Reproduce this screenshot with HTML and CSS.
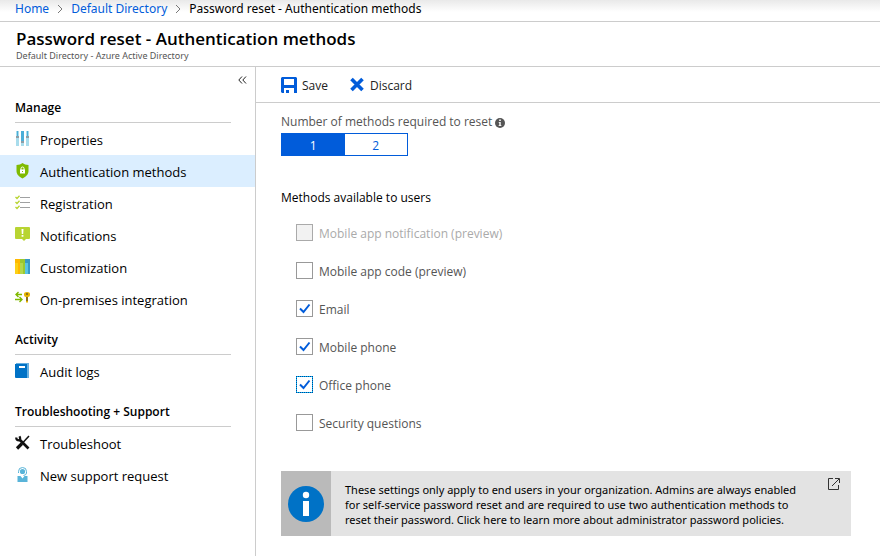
FILE: index.html
```html
<!DOCTYPE html>
<html lang="en">
<head>
<meta charset="utf-8">
<meta name="viewport" content="width=device-width, initial-scale=1">
<title>Password reset - Authentication methods</title>
<link rel="stylesheet" href="styles.css">
</head>
<body>
<nav class="breadcrumb" aria-label="Breadcrumb">
  <a href="#">Home</a>
  <svg class="crumb-sep" viewBox="0 0 6 10" aria-hidden="true"><path d="M1 1l4 4-4 4"/></svg>
  <a href="#">Default Directory</a>
  <svg class="crumb-sep" viewBox="0 0 6 10" aria-hidden="true"><path d="M1 1l4 4-4 4"/></svg>
  <span>Password reset - Authentication methods</span>
</nav>
<header class="blade-header">
  <h1>Password reset - Authentication methods</h1>
  <p>Default Directory - Azure Active Directory</p>
</header>
<div class="blade">
  <aside class="sidebar">
    <button class="collapse" type="button" aria-label="Collapse menu">
      <svg viewBox="0 0 9 8" aria-hidden="true"><path d="M4 .5L.8 4 4 7.500M8 .5L4.800 4 8 7.500"/></svg>
    </button>
    <section class="group">
      <h2>Manage</h2>
      <a class="item" href="#">
        <svg class="icon" viewBox="0 0 16 16" aria-hidden="true"><path fill="#a8dcec" d="M1 0h3v15H1zM6 0h3v15H6zM11 0h3v15h-3z"/><path fill="#4baed8" d="M2 0h1v6H2zM6 0h3v11H6zM12 0h1v5h-1z"/><path fill="#8d9da6" d="M1 5h3v2H1zM6 10h3v2H6zM11 5h3v2h-3z"/></svg>
        <span>Properties</span></a>
      <a class="item selected" href="#" aria-current="page">
        <svg class="icon" viewBox="0 0 16 16" aria-hidden="true"><path fill="#7fba00" d="M7.500 0C9 1.300 11 2 13.500 2v6c0 3.500-2.500 5.500-6 7.500-3.500-2-6-4-6-7.500V2C4 2 6 1.300 7.500 0z"/><path fill="#fff" d="M5 6.500h5v4H5z"/><path fill="none" stroke="#fff" d="M6 7V5.500a1.500 1.500 0 0 1 3 0V7"/><path fill="#7fba00" d="M7 8h1v1H7z"/></svg>
        <span>Authentication methods</span></a>
      <a class="item" href="#">
        <svg class="icon" viewBox="0 0 16 16" aria-hidden="true"><path fill="#a0a1a2" d="M5 2h10v1H5zM5 7h10v1H5zM5 12h10v1H5z"/><path fill="none" stroke="#b8d432" stroke-width="1.300" d="M.5 2l1.500 1.500L4.500.7M.5 7L2 8.500l2.500-2.800M.5 12L2 13.500l2.500-2.800"/></svg>
        <span>Registration</span></a>
      <a class="item" href="#">
        <svg class="icon" viewBox="0 0 16 16" aria-hidden="true"><path fill="#b8d432" d="M1 0h13q1 0 1 1v10q0 1-1 1h-3l-2 2-2-2H1q-1 0-1-1V1q0-1 1-1z"/><path fill="#fff" d="M6.500 2h2l-.3 5H6.800zM6.600 8h1.800v1.800H6.600z"/></svg>
        <span>Notifications</span></a>
      <a class="item" href="#">
        <svg class="icon" viewBox="0 0 16 16" aria-hidden="true"><path fill="#ffb900" d="M0 0h5v15H0z"/><path fill="#fcd116" d="M0 4h3v11H0z"/><path fill="#9bc830" d="M5 0h5v15H5z"/><path fill="#b4d84c" d="M5 4h3v11H5z"/><path fill="#3999c6" d="M10 0h5v15h-5z"/><path fill="#59c4e4" d="M10 4h3v11h-3z"/></svg>
        <span>Customization</span></a>
      <a class="item" href="#">
        <svg class="icon" viewBox="0 0 16 16" aria-hidden="true"><path fill="none" stroke="#7fba00" stroke-width="1.400" d="M7 3.500H1M3.500 1L1 3.500 3.500 6M0 8.500h7M4.500 6L7 8.500 4.500 11"/><path fill="#e8b400" d="M9 3q0-2 3-2t3 2v1q0 2-2 2v5l-1 1-1-1V6Q9 6 9 4z"/><path fill="#333" d="M11 2.500h2v1h-2zM11.500 6h1v4h-1z"/></svg>
        <span>On-premises integration</span></a>
    </section>
    <section class="group">
      <h2>Activity</h2>
      <a class="item" href="#">
        <svg class="icon" viewBox="0 0 16 16" aria-hidden="true"><path fill="#68b0e0" d="M1 0h13v15H1z"/><path fill="#0072c6" d="M0 1h12v14H1q-1 0-1-1z"/><path fill="#fff" d="M4 3h6v2H4z"/></svg>
        <span>Audit logs</span></a>
    </section>
    <section class="group">
      <h2>Troubleshooting + Support</h2>
      <a class="item" href="#">
        <svg class="icon" viewBox="0 0 16 16" aria-hidden="true"><path fill="none" stroke="#111" stroke-width="2.600" d="M4 4l9.500 9.500"/><path fill="none" stroke="#111" stroke-width="2.200" d="M1.200 2.500q0 3 3 3Q6 4 4.500 1.200"/><path fill="none" stroke="#111" stroke-width="1.500" d="M14 1L8 7.500"/><path fill="none" stroke="#111" stroke-width="3.200" d="M7 8.500l-5 5"/></svg>
        <span>Troubleshoot</span></a>
      <a class="item" href="#">
        <svg class="icon" viewBox="0 0 16 16" aria-hidden="true"><circle cx="7.500" cy="4.500" r="2.600" fill="#59b4d9"/><path fill="none" stroke="#59b4d9" d="M3.500 6V4.500a4 4 0 0 1 8 0V6q0 2-3 2.500"/><path fill="#59b4d9" d="M2.500 9h3l2 2.500 2-2.500h3v6h-10z"/></svg>
        <span>New support request</span></a>
    </section>
  </aside>
  <main class="content">
    <div class="toolbar">
      <button type="button">
        <svg viewBox="0 0 16 16" aria-hidden="true"><path fill="#015cda" fill-rule="evenodd" d="M1 0h14l1 1v15h-3v-5H3v5H1l-1-1V1zM3 2v6h10V2zM5 13h3v3H5z"/></svg>
        <span>Save</span></button>
      <button type="button">
        <svg viewBox="0 0 16 16" aria-hidden="true"><path fill="none" stroke="#015cda" stroke-width="3.600" d="M2.500 2l11 11M13.500 2l-11 11"/></svg>
        <span>Discard</span></button>
    </div>
    <form class="settings">
      <fieldset class="count">
        <legend>Number of methods required to reset
          <svg viewBox="0 0 10 10" aria-hidden="true"><circle cx="5" cy="5" r="5" fill="#555"/><path fill="#fff" d="M4.200 1.500h1.600V3H4.200zM3.700 4h2v3.200h.7V8H3.600v-.8h.7V4.800h-.6z"/></svg>
        </legend>
        <div class="toggle">
          <label><input type="radio" name="count" checked><span>1</span></label>
          <label><input type="radio" name="count"><span>2</span></label>
        </div>
      </fieldset>
      <fieldset class="methods">
        <legend>Methods available to users</legend>
        <label class="disabled"><input type="checkbox" disabled><span class="name">Mobile app notification (preview)</span></label>
        <label><input type="checkbox"><span class="name">Mobile app code (preview)</span></label>
        <label><span class="box"><input type="checkbox" checked><svg viewBox="0 0 17 17" aria-hidden="true"><path d="M4 8.500l3.500 3.500L13.500 4.500"/></svg></span><span class="name">Email</span></label>
        <label><span class="box"><input type="checkbox" checked><svg viewBox="0 0 17 17" aria-hidden="true"><path d="M4 8.500l3.500 3.500L13.500 4.500"/></svg></span><span class="name">Mobile phone</span></label>
        <label><span class="box"><input class="focused" type="checkbox" checked><svg viewBox="0 0 17 17" aria-hidden="true"><path d="M4 8.500l3.500 3.500L13.500 4.500"/></svg></span><span class="name">Office phone</span></label>
        <label><input type="checkbox"><span class="name">Security questions</span></label>
      </fieldset>
      <a class="notice" href="#">
        <span class="notice-icon"><svg viewBox="0 0 36 36" aria-hidden="true"><circle cx="18" cy="18" r="18" fill="#0072c6"/><circle cx="18" cy="9" r="3.200" fill="#fff"/><path fill="#fff" d="M15 15h6v15h-6z"/></svg></span>
        <span class="notice-text">These settings only apply to end users in your organization. Admins are always enabled for self-service password reset and are required to use two authentication methods to reset their password. Click here to learn more about administrator password policies.</span>
        <svg class="external" viewBox="0 0 12 12" aria-hidden="true"><path d="M5 .5H.5v11h10V7M4 8l7-7M7 .5h4.500V5"/></svg>
      </a>
    </form>
  </main>
</div>
</body>
</html>
```
FILE: styles.css
```css
* { box-sizing: border-box; }
body {
  margin: 0;
  min-height: 100vh;
  display: flex;
  flex-direction: column;
  background: #fff;
  color: #000;
  font: 12px/16px "Open Sans", "Noto Sans", sans-serif;
}
a { color: inherit; text-decoration: none; }
h1, h2, p { margin: 0; }
button { border: 0; padding: 0; background: none; font: inherit; color: inherit; }
fieldset { border: 0; margin: 0; padding: 0; min-width: 0; }
legend { padding: 0; }

.breadcrumb {
  display: flex;
  align-items: center;
  gap: 8px;
  height: 22px;
  padding: 0 15px 4px;
  border-bottom: 1px solid #ccc;
  background: linear-gradient(#e9e9e9, #fff 12px);
  font-family: "Noto Sans", "Open Sans", sans-serif;
}
.breadcrumb a { color: #015cda; }
.crumb-sep { width: 6px; height: 10px; fill: none; stroke: #777; }

.blade-header { padding: 6px 16px 4px; border-bottom: 1px solid #ccc; }
.blade-header h1 { font-size: 17px; line-height: 22px; font-weight: 600; }
.blade-header p { font: 9px/12px "Noto Sans", "Open Sans", sans-serif; color: #555; }

.blade { flex: 1; display: flex; }
.sidebar { flex: 0 0 256px; border-right: 1px solid #ccc; }
.collapse { display: flex; align-items: center; height: 24px; padding-top: 2px; margin: 0 8px 0 auto; }
.collapse svg { width: 9px; height: 8px; fill: none; stroke: #222; }
.group h2 {
  margin: 0 24px 0 15px;
  padding: 16px 0 5px;
  border-bottom: 1px solid #ccc;
  font-size: 12px;
  line-height: 18px;
  font-weight: 600;
}
.collapse + .group h2 { padding-top: 8px; }
.item {
  display: flex;
  align-items: center;
  gap: 9px;
  height: 32px;
  padding-left: 15px;
  font-size: 13px;
}
.item span, .toolbar span { padding-top: 2px; }
.item.selected { background: #dbeeff; }
.icon { width: 16px; height: 16px; }

.content { flex: 1; min-width: 0; }
.toolbar {
  display: flex;
  align-items: center;
  gap: 21px;
  height: 36px;
  padding-left: 25px;
  border-bottom: 1px solid #ccc;
  color: #222;
}
.toolbar button { display: flex; align-items: center; gap: 5px; }
.toolbar svg { width: 16px; height: 16px; }

.settings { padding: 11px 25px; color: #555; }
.count svg { width: 10px; height: 10px; vertical-align: -2px; }
.toggle { display: flex; width: 127px; height: 23px; margin-top: 3px; border: 1px solid #015cda; }
.toggle label { position: relative; flex: 1; display: flex; }
.toggle input { position: absolute; opacity: 0; margin: 0; }
.toggle span { flex: 1; text-align: center; line-height: 23px; color: #015cda; }
.toggle input:checked + span { background: #015cda; color: #fff; }

.methods { margin-top: 34px; }
.methods legend { color: #000; margin-bottom: 7px; }
.methods label { display: flex; align-items: center; gap: 6px; height: 38px; padding-left: 15px; }
.methods .name { padding-top: 3px; }
.methods .disabled { color: #aaa; }
.methods input {
  appearance: none;
  display: block;
  width: 17px;
  height: 17px;
  margin: 0;
  border: 1px solid #999;
  background: #fff;
}
.methods input:disabled { background: #f2f2f2; border-color: #aaa; }
.methods .focused { border: 1px solid #00bcf2; outline: 1px dotted #01409a; outline-offset: -1px; }
.box { position: relative; display: block; }
.box svg {
  position: absolute;
  inset: 0;
  width: 17px;
  height: 17px;
  fill: none;
  stroke: #015cda;
  stroke-width: 2;
  pointer-events: none;
}

.notice {
  display: flex;
  max-width: 570px;
  min-height: 65px;
  margin-top: 30px;
  background: #e3e3e3;
  color: #000;
  font: 11px/15px "Noto Sans", "Open Sans", sans-serif;
}
.notice-icon { flex: 0 0 50px; display: flex; align-items: center; justify-content: center; background: #bababa; }
.notice-icon svg { width: 36px; height: 36px; }
.notice-text { flex: 1; padding: 11px 24px 9px 14px; }
.external { flex: none; width: 12px; height: 12px; margin: 7px 11px 0 0; fill: none; stroke: #333; }
```
